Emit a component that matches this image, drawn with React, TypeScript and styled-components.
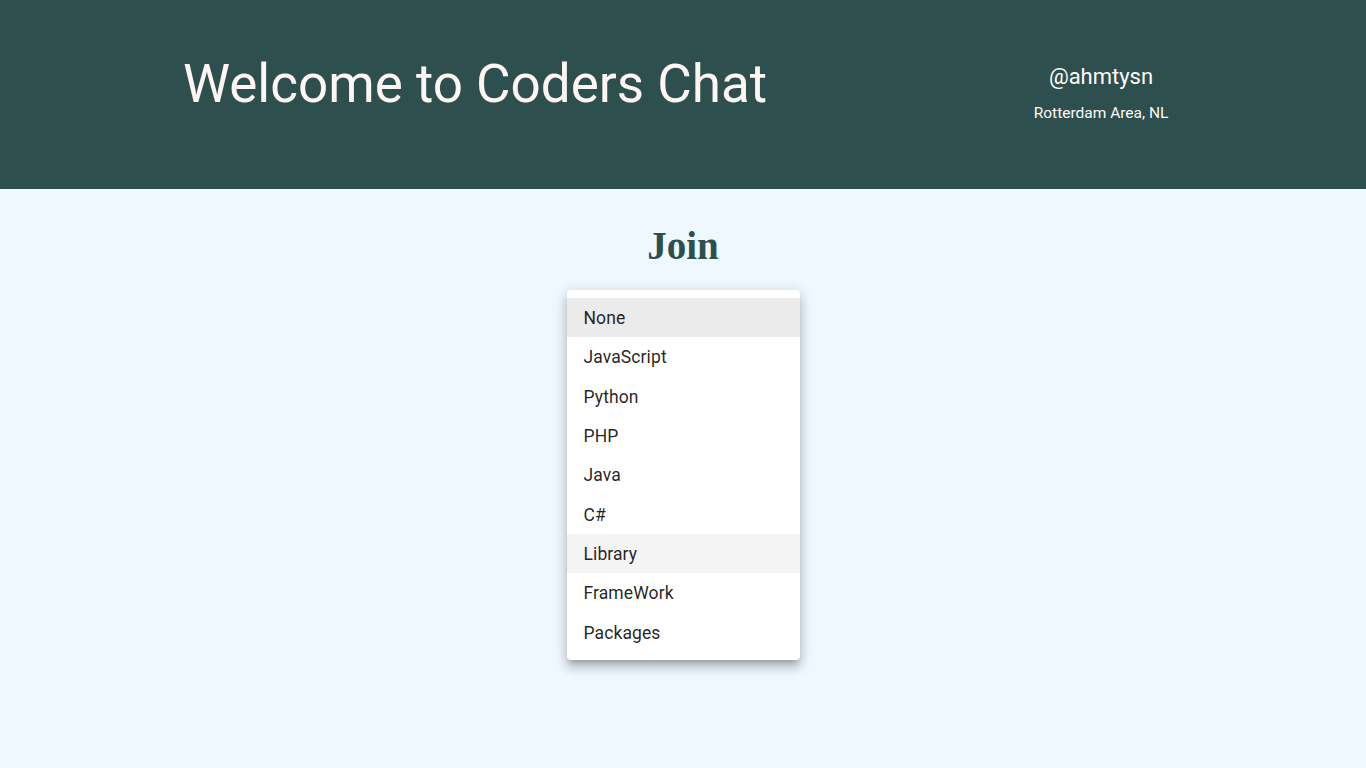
import React from 'react';
import styled, { createGlobalStyle } from 'styled-components';

const GlobalStyle = createGlobalStyle`
  html, body {
    margin: 0;
    padding: 0;
    background: #f0f8ff;
    font-family: Roboto, "Liberation Sans", Arial, sans-serif;
  }
`;

const Page = styled.div`
  min-height: 768px;
  background: #f0f8ff;
`;

const Header = styled.header`
  height: 189px;
  box-sizing: border-box;
  background: #2d4f4e;
  display: flex;
  justify-content: space-between;
  align-items: flex-start;
  padding: 52px 165px 0 183px;
`;

const Title = styled.h1`
  margin: 0;
  font-family: Roboto, sans-serif;
  font-weight: 400;
  font-size: 53px;
  line-height: 64px;
  color: #fff5f3;
`;

const Profile = styled.div`
  width: 200px;
  padding-top: 9px;
  text-align: center;
  color: #fffafa;
`;

const Handle = styled.div`
  font-size: 22px;
  line-height: 32px;
  font-weight: 400;
`;

const Location = styled.div`
  margin-top: 10px;
  font-size: 15.5px;
  line-height: 20px;
`;

const Main = styled.main`
  display: flex;
  flex-direction: column;
  align-items: center;
  padding-top: 34px;
`;

const JoinTitle = styled.h2`
  margin: 0;
  font-family: "Liberation Serif", "Times New Roman", serif;
  font-weight: 700;
  font-size: 39px;
  line-height: 45px;
  color: #2d4f4e;
`;

const Menu = styled.ul`
  list-style: none;
  margin: 22px 0 0;
  padding: 8px 0;
  width: 233px;
  background: #fff;
  border-radius: 4px;
  box-shadow: 0px 5px 5px -3px rgba(0, 0, 0, 0.2), 0px 8px 10px 1px rgba(0, 0, 0, 0.14),
    0px 3px 14px 2px rgba(0, 0, 0, 0.12);
`;

const Item = styled.li<{ $state?: 'selected' | 'hover' }>`
  height: 39.33px;
  display: flex;
  align-items: center;
  padding: 1px 16px 0 17px;
  box-sizing: border-box;
  font-size: 17.5px;
  letter-spacing: 0.1px;
  color: rgba(0, 0, 0, 0.87);
  background: ${p =>
    p.$state === 'selected' ? '#ebebeb' : p.$state === 'hover' ? '#f4f4f4' : 'transparent'};
`;

const options = ['None', 'JavaScript', 'Python', 'PHP', 'Java', 'C#', 'Library', 'FrameWork', 'Packages'];

export default function App() {
  return (
    <Page>
      <GlobalStyle />
      <Header>
        <Title>Welcome to Coders Chat</Title>
        <Profile>
          <Handle>@ahmtysn</Handle>
          <Location>Rotterdam Area, NL</Location>
        </Profile>
      </Header>
      <Main>
        <JoinTitle>Join</JoinTitle>
        <Menu>
          {options.map(o => (
            <Item
              key={o}
              $state={o === 'None' ? 'selected' : o === 'Library' ? 'hover' : undefined}
            >
              {o}
            </Item>
          ))}
        </Menu>
      </Main>
    </Page>
  );
}
